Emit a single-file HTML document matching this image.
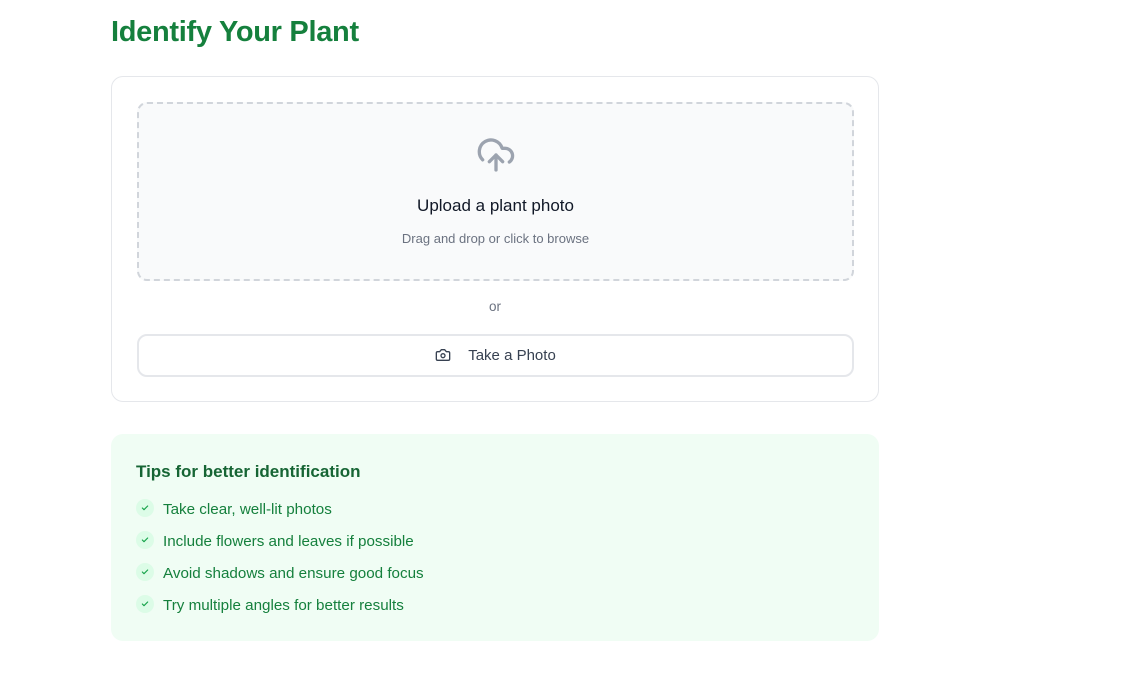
<!DOCTYPE html>
<html><head><meta charset="utf-8"><style>
*{box-sizing:border-box;margin:0;padding:0}
body{width:1147px;height:680px;background:#fff;font-family:"Liberation Sans",sans-serif;position:relative;overflow:hidden}
h1{position:absolute;left:111px;top:16px;font-size:29px;font-weight:bold;color:#15803d;letter-spacing:-0.3px}
.card{position:absolute;left:111px;top:76px;width:768px;height:326px;border:1px solid #e5e7eb;border-radius:12px;background:#fff}
.drop{position:absolute;left:25px;top:25px;width:717px;height:179px;border:2px dashed #d1d5db;border-radius:10px;background:#f9fafb;text-align:center}
.drop svg{position:absolute;left:337px;top:31px}
.t1{position:absolute;left:0;right:0;top:92px;font-size:17px;color:#111827}
.t2{position:absolute;left:0;right:0;top:127px;font-size:13px;color:#6b7280}
.or{position:absolute;left:0;right:0;top:222px;text-align:center;font-size:13.5px;color:#6b7280}
.btn{position:absolute;left:25px;top:257px;width:717px;height:43px;border:2px solid #e5e7eb;border-radius:10px;background:#fff;font-size:15px;color:#374151;text-align:center;line-height:39px}
.btn svg{vertical-align:-3px;margin-right:17px}
.tips{position:absolute;left:111px;top:434px;width:768px;height:207px;background:#f0fdf4;border-radius:12px}
.tips h2{position:absolute;left:25px;top:28px;font-size:17px;font-weight:bold;color:#166534}
.li{position:absolute;left:25px;font-size:15.2px;color:#15803d;height:20px;line-height:20px}
.li span{display:inline-block;width:18px;height:18px;border-radius:50%;background:#dcfce7;vertical-align:middle;margin-right:9px;position:relative;top:-2px;text-align:center}
.li span svg{position:absolute;left:5px;top:5px}
</style></head><body>
<h1>Identify Your Plant</h1>
<div class="card">
<div class="drop">
<svg width="40" height="40" viewBox="0 0 24 24" fill="none" stroke="#9ca3af" stroke-width="2" stroke-linecap="round" stroke-linejoin="round"><path d="M4 14.9A7 7 0 1 1 15.7 8h1.8a4.5 4.5 0 0 1 2.5 8.2"/><path d="M12 12v9"/><path d="m16 16-4-4-4 4"/></svg>
<div class="t1">Upload a plant photo</div>
<div class="t2">Drag and drop or click to browse</div>
</div>
<div class="or">or</div>
<div class="btn"><svg width="16" height="16" viewBox="0 0 24 24" fill="none" stroke="#374151" stroke-width="2" stroke-linecap="round" stroke-linejoin="round"><path d="M14.5 4h-5L7 7H4a2 2 0 0 0-2 2v9a2 2 0 0 0 2 2h16a2 2 0 0 0 2-2V9a2 2 0 0 0-2-2h-3l-2.5-3z"/><circle cx="12" cy="13" r="3"/></svg>Take a Photo</div>
</div>
<div class="tips">
<h2>Tips for better identification</h2>
<div class="li" style="top:66px"><span><svg width="8" height="8" viewBox="0 0 24 24" fill="none" stroke="#16a34a" stroke-width="3.5" stroke-linecap="round" stroke-linejoin="round"><path d="M20 6 9 17l-5-5"/></svg></span>Take clear, well-lit photos</div>
<div class="li" style="top:98px"><span><svg width="8" height="8" viewBox="0 0 24 24" fill="none" stroke="#16a34a" stroke-width="3.5" stroke-linecap="round" stroke-linejoin="round"><path d="M20 6 9 17l-5-5"/></svg></span>Include flowers and leaves if possible</div>
<div class="li" style="top:130px"><span><svg width="8" height="8" viewBox="0 0 24 24" fill="none" stroke="#16a34a" stroke-width="3.5" stroke-linecap="round" stroke-linejoin="round"><path d="M20 6 9 17l-5-5"/></svg></span>Avoid shadows and ensure good focus</div>
<div class="li" style="top:162px"><span><svg width="8" height="8" viewBox="0 0 24 24" fill="none" stroke="#16a34a" stroke-width="3.5" stroke-linecap="round" stroke-linejoin="round"><path d="M20 6 9 17l-5-5"/></svg></span>Try multiple angles for better results</div>
</div>
</body></html>
